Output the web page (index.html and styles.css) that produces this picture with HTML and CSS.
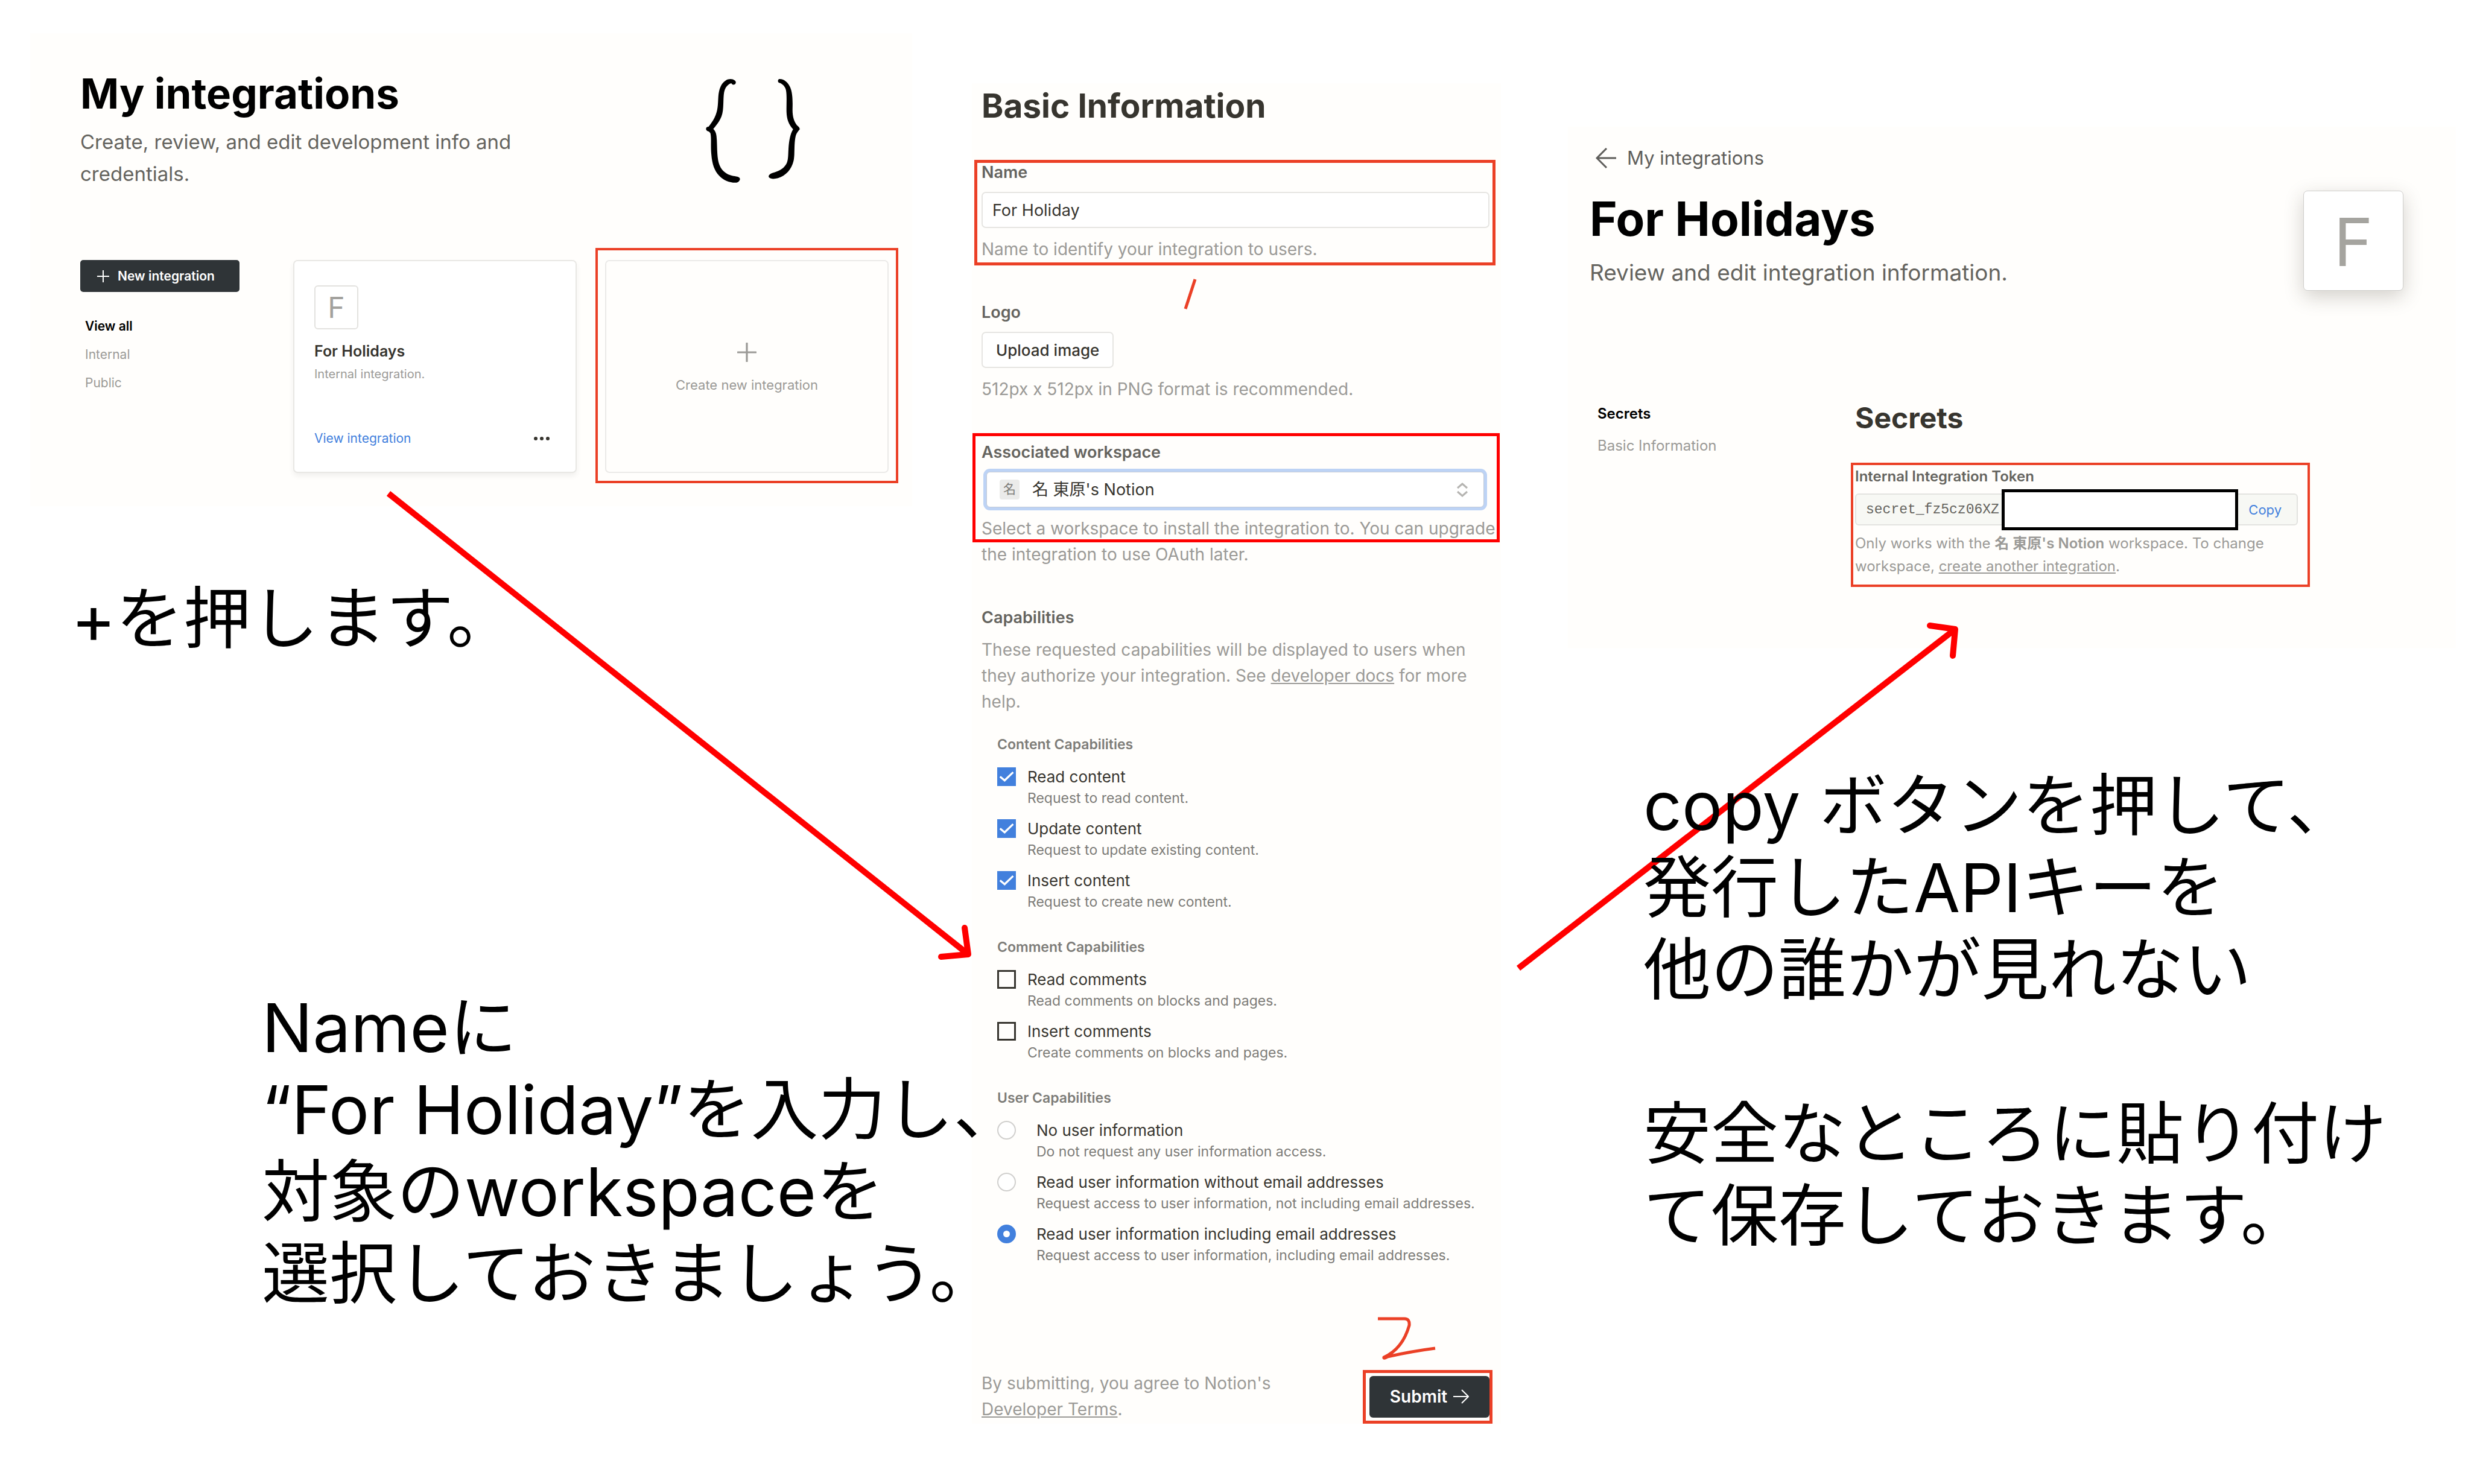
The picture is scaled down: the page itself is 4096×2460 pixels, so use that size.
FILE: index.html
```html
<!DOCTYPE html>
<html lang="ja">
<head>
<meta charset="utf-8">
<title>Notion integration guide</title>
<link rel="stylesheet" href="styles.css">
</head>
<body>
<main class="board">
  <svg class="arrows" viewBox="0 0 4096 2460" fill="none" stroke="#ff0000" stroke-width="10" stroke-linejoin="round" aria-hidden="true">
    <path d="M644 818 1605 1582"/>
    <path d="M1599 1538 1605 1582 1560 1586" stroke-linecap="round"/>
    <path d="M2517 1605 3241 1043"/>
    <path d="M3199 1037 3241 1043 3237 1087" stroke-linecap="round"/>
  </svg>

  <div class="column column-list">
    <section class="panel panel-list">
      <header class="list-header">
        <div>
          <h1 class="list-title">My integrations</h1>
          <p class="list-lead">Create, review, and edit development info and credentials.</p>
        </div>
        <svg class="braces" viewBox="0 0 780 660" aria-hidden="true">
          <path d="M294 88C306 87 310 74 301 66C288 55 268 56 254 64C226 80 216 115 213 150C210 195 212 225 192 264C182 284 172 295 161 311C150 311 145 318 149 328C154 336 166 334 171 346C177 375 171 410 176 460C180 510 192 545 218 572C244 598 275 610 310 608C322 606 332 592 326 583C318 574 300 576 278 569C240 556 220 530 212 490C204 445 208 400 203 360C201 344 196 332 186 323C206 299 232 270 237 225C243 180 236 130 252 104C260 91 272 82 282 80C286 86 289 88 294 88Z"/>
          <path d="M536 58C528 62 527 74 536 78C552 82 567 96 572 116C578 145 574 190 575 232C576 270 586 298 610 324C594 350 589 385 586 420C583 460 586 490 572 512C556 538 530 548 500 557C486 562 476 572 482 580C490 590 512 589 530 584C570 572 602 538 613 490C620 455 614 400 624 360C629 342 638 334 645 325C646 318 640 311 630 303C614 280 606 255 607 215C608 175 608 130 594 100C582 76 562 56 536 58Z"/>
        </svg>
      </header>
      <div class="list-body">
        <div>
          <button class="btn-new" type="button">
            <svg class="icon-plus-small" viewBox="0 0 20 20" aria-hidden="true"><path d="M10 0v20M0 10h20" stroke="#fff" stroke-width="2"/></svg>
            New integration
          </button>
          <nav class="list-nav">
            <a class="current" href="#all">View all</a>
            <a href="#internal">Internal</a>
            <a href="#public">Public</a>
          </nav>
        </div>
        <article class="card">
          <div class="card-logo">F</div>
          <h2 class="card-title">For Holidays</h2>
          <p class="card-kind">Internal integration.</p>
          <div class="card-footer">
            <a href="#view">View integration</a>
            <button class="btn-more" type="button" aria-label="More">
              <svg viewBox="0 0 28 8" aria-hidden="true"><circle cx="4" cy="4" r="3"/><circle cx="14" cy="4" r="3"/><circle cx="24" cy="4" r="3"/></svg>
            </button>
          </div>
        </article>
        <div class="mark mark-create">
          <button class="card-create" type="button">
            <svg class="icon-plus" viewBox="0 0 30 30" aria-hidden="true"><path d="M15 1v28M1 15h28" stroke="#9b9a97" stroke-width="3" stroke-linecap="round"/></svg>
            Create new integration
          </button>
        </div>
      </div>
    </section>
    <p class="caption caption-press">+を押します。</p>
    <p class="caption caption-name">Nameに<br>“For Holiday”を入力し、<br>対象のworkspaceを<br>選択しておきましょう。</p>
  </div>

  <div class="column column-form">
    <form class="panel panel-form">
      <h2 class="form-title">Basic Information</h2>
      <div class="field mark mark-name">
        <label for="name">Name</label>
        <input class="text-input" id="name" type="text" value="For Holiday">
        <p class="help">Name to identify your integration to users.</p>
      </div>
      <div class="field">
        <label for="logo">Logo</label>
        <button class="btn-upload" id="logo" type="button">Upload image</button>
        <p class="help">512px x 512px in PNG format is recommended.</p>
      </div>
      <div class="field mark mark-workspace">
        <label for="workspace">Associated workspace</label>
        <div class="select-box">
          <span class="badge">名</span>
          <select id="workspace"><option>名 東原's Notion</option></select>
          <svg class="chevrons" viewBox="0 0 18 24" fill="none" stroke="#b5b4b1" stroke-width="3" aria-hidden="true"><path d="M1 9 9 2l8 7M1 15l8 7 8-7"/></svg>
        </div>
        <p class="help">Select a workspace to install the integration to. You can upgrade the integration to use OAuth later.</p>
      </div>
      <div class="field">
        <h3 class="field-title">Capabilities</h3>
        <p class="help">These requested capabilities will be displayed to users when they authorize your integration. See <a href="#docs">developer docs</a> for more help.</p>
      </div>

      <fieldset class="group">
        <legend>Content Capabilities</legend>
        <div class="option"><input type="checkbox" id="c1" checked><label for="c1">Read content</label><p>Request to read content.</p></div>
        <div class="option"><input type="checkbox" id="c2" checked><label for="c2">Update content</label><p>Request to update existing content.</p></div>
        <div class="option"><input type="checkbox" id="c3" checked><label for="c3">Insert content</label><p>Request to create new content.</p></div>
      </fieldset>
      <fieldset class="group">
        <legend>Comment Capabilities</legend>
        <div class="option"><input type="checkbox" id="c4"><label for="c4">Read comments</label><p>Read comments on blocks and pages.</p></div>
        <div class="option"><input type="checkbox" id="c5"><label for="c5">Insert comments</label><p>Create comments on blocks and pages.</p></div>
      </fieldset>
      <fieldset class="group group-radio">
        <legend>User Capabilities</legend>
        <div class="option"><input type="radio" name="user" id="u1"><label for="u1">No user information</label><p>Do not request any user information access.</p></div>
        <div class="option"><input type="radio" name="user" id="u2"><label for="u2">Read user information without email addresses</label><p>Request access to user information, not including email addresses.</p></div>
        <div class="option"><input type="radio" name="user" id="u3" checked><label for="u3">Read user information including email addresses</label><p>Request access to user information, including email addresses.</p></div>
      </fieldset>

      <footer class="form-footer">
        <p class="terms">By submitting, you agree to Notion's <a href="#terms">Developer Terms</a>.</p>
        <div class="mark mark-submit">
          <button class="btn-submit" type="submit">Submit
            <svg class="icon-arrow" viewBox="0 0 26 24" fill="none" stroke="#fff" stroke-width="2" aria-hidden="true"><path d="M0 12h25M14 1l11 11-11 11"/></svg>
          </button>
        </div>
      </footer>
    </form>
  </div>

  <div class="column column-detail">
    <section class="panel panel-detail">
      <a class="back" href="#list">
        <svg class="icon-back" viewBox="0 0 34 34" fill="none" stroke="#5f5e5b" stroke-width="3" aria-hidden="true"><path d="M34 17H2M18 1 2 17l16 16"/></svg>
        My integrations
      </a>
      <header class="detail-header">
        <div>
          <h1 class="detail-title">For Holidays</h1>
          <p class="detail-lead">Review and edit integration information.</p>
        </div>
        <div class="detail-logo">F</div>
      </header>
      <div class="detail-body">
        <nav class="detail-nav">
          <a class="current" href="#secrets">Secrets</a>
          <a href="#basic">Basic Information</a>
        </nav>
        <div>
          <h2 class="secrets-title">Secrets</h2>
          <div class="mark mark-token">
            <label class="token-label" for="token">Internal Integration Token</label>
            <div class="token-box">
              <input id="token" type="text" value="secret_fz5cz06XZ" readonly>
              <button class="btn-copy" type="button">Copy</button>
              <span class="redaction"></span>
            </div>
            <p class="token-help">Only works with the <strong>名 東原's Notion</strong> workspace. To change workspace, <a href="#new">create another integration</a>.</p>
          </div>
        </div>
      </div>
    </section>
    <p class="caption caption-copy">copy ボタンを押して、<br>発行したAPIキーを<br>他の誰かが見れない<br><br>安全なところに貼り付け<br>て保存しておきます。</p>
  </div>

  <svg class="strokes" viewBox="0 0 4096 2460" fill="none" stroke="#eb4026" stroke-width="5" aria-hidden="true">
    <path d="M1981 463 1965 512"/>
    <path d="M2284 2186H2328Q2337 2186 2336 2197Q2325 2236 2294 2250Q2293 2253 2300 2249Q2340 2240 2379 2235"/>
  </svg>
</main>
</body>
</html>
```
FILE: styles.css
```css
* {
  box-sizing: border-box;
}

body {
  margin: 0;
  background: #fff;
  color: #37352f;
  font-family: Inter, "Noto Sans CJK JP", sans-serif;
}

h1, h2, h3, p, fieldset {
  margin: 0;
  padding: 0;
  border: 0;
}

button, input, select {
  margin: 0;
  padding: 0;
  border: 0;
  background: none;
  color: inherit;
  font-family: inherit;
}

svg {
  display: block;
}

/* Board */

.board {
  position: relative;
  display: flex;
  align-items: flex-start;
  min-height: 100vh;
  padding: 0 25px 0 50px;
}

.column {
  min-width: 0;
}

.column-list {
  flex: 1462 1 0;
  padding-top: 55px;
}

.column-form {
  flex: 877 1 0;
  margin-left: 99px;
  padding-top: 138px;
}

.column-detail {
  flex: 1472 1 0;
  margin-left: 111px;
  padding-top: 210px;
}

.panel {
  background: #fffefc;
}

.arrows,
.strokes {
  position: absolute;
  top: 0;
  left: 0;
  z-index: 1;
  width: 100%;
  pointer-events: none;
}

.caption {
  position: relative;
  z-index: 2;
  color: #000;
  font-size: 112px;
  line-height: 136px;
  white-space: nowrap;
}

.caption-press {
  margin: 118px 0 0 68px;
}

.caption-name {
  margin: 542px 0 0 384px;
}

.caption-copy {
  margin: 192px 0 0 125px;
}

/* Highlight frames drawn over the screens */

.mark {
  position: relative;
}

.mark::after {
  content: "";
  position: absolute;
  border: 5px solid #eb4026;
  pointer-events: none;
}

.mark-create::after {
  inset: -20px -16px -17px;
  border-width: 4px;
}

.mark-name::after {
  inset: -3px -10px -5px -12px;
}

.mark-workspace::after {
  inset: -14px -17px 42px -15px;
  border-color: #f00;
}

.mark-submit::after {
  inset: -10px -5px -10px -11px;
}

.mark-token::after {
  inset: -7px -20px -15px -7px;
  border-width: 4px;
}

/* Integration list */

.panel-list {
  padding: 58px 39px 55px 83px;
}

.list-header {
  display: flex;
  justify-content: space-between;
}

.list-title {
  color: #000;
  font-size: 69px;
  font-weight: 700;
  line-height: 84px;
}

.list-lead {
  max-width: 760px;
  margin-top: 12px;
  color: #65645f;
  font-size: 33px;
  line-height: 53px;
}

.braces {
  width: 244px;
  height: 206px;
  margin-right: 105px;
}

.list-body {
  display: grid;
  grid-template-columns: 264px 512fr 470fr;
  column-gap: 47px;
  margin-top: 112px;
}

.btn-new {
  display: flex;
  align-items: center;
  gap: 14px;
  width: 100%;
  height: 53px;
  padding-left: 28px;
  border-radius: 5px;
  background: #2f3437;
  color: #fff;
  font-size: 21px;
  font-weight: 600;
}

.icon-plus-small {
  width: 20px;
  height: 20px;
}

.list-nav {
  display: flex;
  flex-direction: column;
  margin-top: 33px;
  padding-left: 8px;
  font-size: 21px;
  line-height: 47px;
}

.list-nav a,
.detail-nav a {
  color: #9b9a97;
  text-decoration: none;
}

.list-nav .current,
.detail-nav .current {
  color: #000;
  font-weight: 600;
}

.card {
  display: flex;
  flex-direction: column;
  min-height: 353px;
  margin-left: 42px;
  padding: 40px 42px 41px 33px;
  border: 2px solid #e8e7e4;
  border-radius: 7px;
  background: #fff;
  box-shadow: 0 5px 10px rgba(15, 15, 15, 0.06);
}

.card-logo {
  width: 73px;
  height: 73px;
  border: 2px solid #e3e2df;
  border-radius: 6px;
  color: #a3a29e;
  font-size: 48px;
  line-height: 69px;
  text-align: center;
}

.card-title {
  margin-top: 20px;
  font-size: 25px;
  font-weight: 600;
  line-height: 32px;
}

.card-kind {
  margin-top: 8px;
  color: #9b9a97;
  font-size: 20px;
  line-height: 28px;
}

.card-footer {
  display: flex;
  align-items: center;
  justify-content: space-between;
  margin-top: auto;
  font-size: 21px;
  line-height: 28px;
}

.card-footer a {
  color: #4280dd;
  text-decoration: none;
}

.btn-more svg {
  width: 28px;
  height: 8px;
  fill: #37352f;
}

.card-create {
  display: flex;
  flex-direction: column;
  align-items: center;
  justify-content: center;
  gap: 24px;
  width: 100%;
  height: 100%;
  padding-top: 4px;
  border: 2px solid #ebeae8;
  border-radius: 7px;
  color: #9b9a97;
  font-size: 22px;
  line-height: 28px;
}

.icon-plus {
  width: 32px;
  height: 32px;
}

/* Basic information form */

.panel-form {
  padding: 4px 19px 2px 16px;
}

.form-title {
  margin-bottom: 60px;
  font-size: 55px;
  font-weight: 700;
  line-height: 66px;
}

.field + .field {
  margin-top: 65px;
}

.field > label,
.field-title {
  display: block;
  color: #65645f;
  font-size: 27px;
  font-weight: 600;
  line-height: 36px;
}

.text-input,
.btn-upload {
  display: block;
  height: 60px;
  margin-top: 14px;
  border: 2px solid #e6e5e2;
  border-radius: 7px;
  background: #fff;
}

.text-input {
  width: 100%;
  padding-left: 16px;
  font-size: 27px;
}

.btn-upload {
  padding: 0 22px;
  font-size: 26px;
  font-weight: 500;
}

.help,
.terms {
  color: #9b9a97;
  font-size: 28px;
  line-height: 43px;
}

.help {
  margin-top: 14px;
  margin-right: -16px;
}

.help a,
.terms a,
.token-help a {
  color: inherit;
}

.select-box {
  position: relative;
  height: 59px;
  margin: 14px 9px 0 8px;
  border: 1px solid #c3cad6;
  border-radius: 6px;
  background: #fff;
  box-shadow: 0 0 0 5px #bdd3f5;
}

.select-box select {
  width: 100%;
  height: 100%;
  padding-left: 75px;
  appearance: none;
  font-size: 27px;
}

.badge {
  position: absolute;
  top: 12px;
  left: 21px;
  width: 33px;
  height: 33px;
  border-radius: 4px;
  background: #ebebea;
  color: #7d7c78;
  font-size: 21px;
  line-height: 32px;
  text-align: center;
}

.chevrons {
  position: absolute;
  top: 17px;
  right: 26px;
  width: 18px;
  height: 24px;
}

.group {
  margin: 45px 0 0 26px;
}

.field + .group {
  margin-top: 34px;
}

.group legend {
  padding: 0;
  margin-bottom: 21px;
  color: #7d7c78;
  font-size: 23px;
  font-weight: 600;
  line-height: 30px;
}

.option {
  display: grid;
  grid-template-columns: 31px 1fr;
  column-gap: 19px;
  row-gap: 2px;
}

.group-radio .option {
  column-gap: 34px;
}

.option + .option {
  margin-top: 18px;
}

.option label {
  font-size: 26px;
  line-height: 36px;
}

.option p {
  grid-column: 2;
  color: #7d7c78;
  font-size: 23px;
  line-height: 30px;
}

.option input {
  display: grid;
  place-items: center;
  width: 31px;
  height: 31px;
  margin-top: 2px;
  appearance: none;
}

.option input[type="checkbox"] {
  border: 3px solid #37352f;
}

.option input[type="checkbox"]:checked {
  border: 0;
  background: #4280dd;
}

.option input[type="checkbox"]:checked::before {
  content: "";
  width: 24px;
  height: 18px;
  background: #fff;
  clip-path: polygon(0 55%, 10% 43%, 36% 72%, 91% 3%, 100% 15%, 37% 97%);
}

.option input[type="radio"] {
  border: 2px solid #d0cfcd;
  border-radius: 50%;
  background: #fff;
}

.option input[type="radio"]:checked {
  border: 10px solid #4280dd;
}

.form-footer {
  display: flex;
  align-items: center;
  justify-content: space-between;
  margin-top: 176px;
}

.terms {
  max-width: 520px;
}

.btn-submit {
  display: flex;
  align-items: center;
  justify-content: center;
  gap: 10px;
  width: 199px;
  height: 69px;
  border-radius: 6px;
  background: #2f3437;
  color: #fff;
  font-size: 28px;
  font-weight: 600;
}

.icon-arrow {
  width: 26px;
  height: 24px;
}

/* Integration detail */

.panel-detail {
  padding: 32px 0 117px 36px;
}

.back {
  display: flex;
  align-items: center;
  gap: 18px;
  padding-left: 10px;
  color: #5f5e5b;
  font-size: 31px;
  line-height: 40px;
  text-decoration: none;
}

.icon-back {
  width: 34px;
  height: 34px;
}

.detail-header {
  display: flex;
  justify-content: space-between;
  margin-top: 34px;
  padding-right: 87px;
}

.detail-title {
  color: #000;
  font-size: 78px;
  font-weight: 700;
  line-height: 94px;
}

.detail-lead {
  margin-top: 18px;
  color: #65645f;
  font-size: 37px;
  line-height: 48px;
}

.detail-logo {
  width: 166px;
  height: 166px;
  border: 1px solid #cfcecb;
  border-radius: 7px;
  background: #fff;
  box-shadow: 0 10px 32px rgba(55, 45, 30, 0.22);
  color: #a5a49f;
  font-size: 110px;
  line-height: 168px;
  text-align: center;
}

.detail-body {
  display: grid;
  grid-template-columns: 440fr 734fr;
  margin-top: 177px;
  padding-right: 262px;
}

.detail-nav {
  display: flex;
  flex-direction: column;
  padding-left: 13px;
  font-size: 24px;
  line-height: 53px;
}

.secrets-title {
  margin-bottom: 52px;
  padding-top: 5px;
  font-size: 48px;
  font-weight: 700;
  line-height: 58px;
}

.token-label {
  display: block;
  color: #65645f;
  font-size: 24px;
  font-weight: 600;
  line-height: 32px;
}

.token-box {
  position: relative;
  display: flex;
  height: 53px;
  margin-top: 12px;
  border: 2px solid #e3e3e0;
  border-radius: 6px;
  background: #f7f8f4;
}

.token-box input {
  flex: 1;
  min-width: 0;
  padding-left: 16px;
  color: #65645f;
  font-family: "Liberation Mono", monospace;
  font-size: 23px;
}

.btn-copy {
  padding-right: 25px;
  color: #4280dd;
  font-size: 22px;
}

.redaction {
  position: absolute;
  top: -9px;
  right: 97px;
  left: 241px;
  height: 68px;
  border: 5px solid #000;
  background: #fff;
}

.token-help {
  margin-top: 11px;
  color: #9b9a97;
  font-size: 24px;
  line-height: 38px;
}

.token-help strong {
  font-weight: 600;
}
```
